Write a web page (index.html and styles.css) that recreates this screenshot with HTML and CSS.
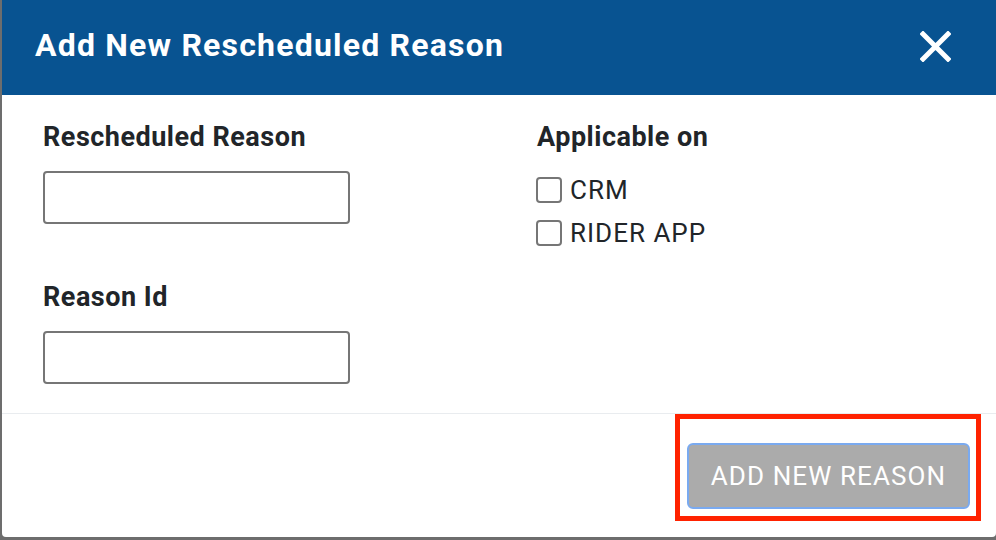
FILE: index.html
```html
<!DOCTYPE html>
<html lang="en">
<head>
<meta charset="utf-8">
<title>Add New Rescheduled Reason</title>
<link rel="stylesheet" href="styles.css">
</head>
<body>
<div class="modal">
  <div class="modal-header">
    <h1 class="modal-title">Add New Rescheduled Reason</h1>
    <button class="close" type="button" aria-label="Close">
      <svg width="31" height="31" viewBox="0 0 31 31"><path d="M3 3 L28 28 M28 3 L3 28" stroke="#fff" stroke-width="5" stroke-linecap="square" fill="none"/></svg>
    </button>
  </div>
  <div class="modal-body">
    <div class="col">
      <label class="field-label">Rescheduled Reason</label>
      <input class="text-input" type="text">
      <label class="field-label second">Reason Id</label>
      <input class="text-input" type="text">
    </div>
    <div class="col">
      <div class="field-label">Applicable on</div>
      <div class="checks">
        <label class="check"><span class="box"></span>CRM</label>
        <label class="check"><span class="box"></span>RIDER APP</label>
      </div>
    </div>
  </div>
  <div class="modal-footer">
    <div class="btn-wrap">
      <button class="btn" type="button">ADD NEW REASON</button>
      <div class="highlight"></div>
    </div>
  </div>
</div>
</body>
</html>
```

FILE: styles.css
```css
html, body {
  margin: 0;
  padding: 0;
}
body {
  background: #6d6d6d;
  width: 996px;
  height: 540px;
  overflow: hidden;
  font-family: Roboto, "Liberation Sans", sans-serif;
  color: #212529;
}
.modal {
  margin-left: 2px;
  width: 994px;
  height: 537px;
  background: #fff;
  border-radius: 0 0 4px 4px;
  display: flex;
  flex-direction: column;
}
.modal-header {
  height: 95px;
  box-sizing: border-box;
  background: #085391;
  display: flex;
  align-items: center;
  justify-content: space-between;
  padding: 0 45px 0 33px;
}
.modal-title {
  margin: 0;
  color: #fff;
  font-size: 32px;
  font-weight: 700;
  letter-spacing: 1.2px;
  line-height: 36px;
  padding-bottom: 5px;
}
.close {
  background: none;
  border: 0;
  padding: 0;
  width: 31px;
  height: 31px;
  display: flex;
  margin-bottom: 2px;
}
.modal-body {
  display: grid;
  grid-template-columns: 494px 1fr;
  padding: 28px 0 29px 41px;
  border-bottom: 1px solid #e9ecef;
}
.col {
  display: flex;
  flex-direction: column;
  align-items: flex-start;
}
.field-label {
  font-size: 27px;
  font-weight: 700;
  letter-spacing: 0.5px;
  line-height: 28px;
  margin-bottom: 20px;
}
.field-label.second {
  margin-top: 59px;
}
.text-input {
  width: 307px;
  height: 53px;
  box-sizing: border-box;
  border: 2px solid #767676;
  border-radius: 4px;
  margin: 0;
}
.checks {
  display: flex;
  flex-direction: column;
  gap: 15px;
  margin-top: 5px;
}
.check {
  display: flex;
  align-items: center;
  gap: 8px;
  font-size: 26px;
  letter-spacing: 1px;
  line-height: 28px;
  color: #212529;
}
.box {
  width: 26px;
  height: 26px;
  box-sizing: border-box;
  border: 2px solid #767676;
  border-radius: 4px;
  margin-left: -1px;
}
.modal-footer {
  display: flex;
  justify-content: flex-end;
  padding: 29px 26px 0 0;
}
.btn-wrap {
  position: relative;
}
.btn {
  height: 66px;
  width: 283px;
  box-sizing: border-box;
  background: #ababab;
  border: 2px solid #7aaaf0;
  border-radius: 6px;
  color: #fff;
  font-family: Roboto, "Liberation Sans", sans-serif;
  font-size: 26px;
  font-weight: 400;
  letter-spacing: 1.1px;
  padding: 0;
  display: flex;
  align-items: center;
  justify-content: center;
}
.highlight {
  position: absolute;
  left: -12px;
  top: -29px;
  width: 306px;
  height: 107px;
  box-sizing: border-box;
  border: 5px solid #ff2200;
}
```
